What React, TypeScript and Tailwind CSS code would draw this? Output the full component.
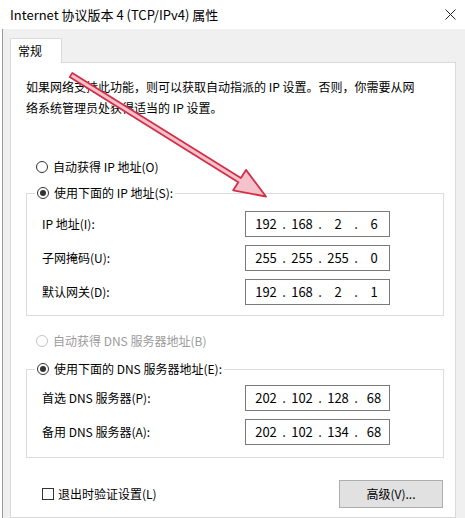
import React from 'react';

const FONT = "font-['Noto_Sans_CJK_SC','Noto_Sans',sans-serif]";

function Radio({ checked, disabled }: { checked?: boolean; disabled?: boolean }) {
  return (
    <span
      className={`flex h-[12px] w-[12px] shrink-0 items-center justify-center rounded-full border bg-white ${
        disabled ? 'border-[#c4c4c4]' : 'border-[#333333]'
      }`}
    >
      {checked && <span className="h-[6px] w-[6px] rounded-full bg-[#333333]" />}
    </span>
  );
}

// IP address control: four centered fields with dots between
function IpBox({ parts }: { parts: string[] }) {
  return (
    <div className="flex h-[26px] w-[145px] shrink-0 items-center border border-[#7a7a7a] bg-white pl-[8px] text-[13px] text-black">
      {parts.map((p, i) => (
        <React.Fragment key={i}>
          <span className="w-[24px] text-center">{p}</span>
          {i < 3 && <span className="w-[12px] text-center">.</span>}
        </React.Fragment>
      ))}
    </div>
  );
}

function Row({ label, parts }: { label: string; parts: string[] }) {
  return (
    <div className="flex items-center">
      <span className="w-[203px] shrink-0">{label}</span>
      <IpBox parts={parts} />
    </div>
  );
}

// group box with a radio as its caption sitting on the top border
function GroupBox({ caption, children, className }: { caption: string; children: React.ReactNode; className: string }) {
  return (
    <div className={`w-[418px] border border-[#dcdcdc] ${className}`}>
      <div className="-mt-[11px] ml-[8px] flex h-[20px] w-fit items-center gap-[5px] bg-white px-[2px]">
        <Radio checked />
        <span>{caption}</span>
      </div>
      {children}
    </div>
  );
}

function ArrowOverlay() {
  return (
    <svg className="pointer-events-none absolute left-0 top-0" width="465" height="518">
      <polygon
        points="69.7,77.1 238.3,182.2 233.2,190.3 266,196.5 246,169.9 240.9,178 72.3,72.9"
        fill="#f4c2ca"
        stroke="#d2304a"
        strokeWidth="1.8"
        strokeLinejoin="round"
      />
    </svg>
  );
}

export default function App() {
  return (
    <div className={`relative flex h-[518px] w-[465px] flex-col overflow-hidden bg-white text-[12px] text-black ${FONT}`}>
      {/* title bar */}
      <div className="flex h-[29px] shrink-0 items-center justify-between pl-[10px] pr-[9px]">
        <span className="text-[13px]">Internet 协议版本 4 (TCP/IPv4) 属性</span>
        <svg width="11" height="11" viewBox="0 0 11 11">
          <path d="M0.5 0.5 L10.5 10.5 M10.5 0.5 L0.5 10.5" stroke="#222" strokeWidth="1" />
        </svg>
      </div>

      <div className="ml-[2px] flex flex-1 flex-col border-l border-[#9a9a9a] bg-[#f0f0f0] pl-[7px] pt-[9px]">
        {/* tab */}
        <div className="relative z-10 -mb-px flex h-[25px] w-[52px] items-center border-x border-t border-[#d9d9d9] bg-white pl-[7px]">
          常规
        </div>

        {/* panel */}
        <div className="flex w-[446px] flex-1 flex-col border border-[#d9d9d9] bg-white pl-[15px] pr-[11px] pt-[13px]">
          <p className="leading-[21px]">
            如果网络支持此功能，则可以获取自动指派的 IP 设置。否则，你需要从网
            <br />
            络系统管理员处获得适当的 IP 设置。
          </p>

          <div className="ml-[10px] mt-[39px] flex h-[20px] items-center gap-[5px]">
            <Radio />
            <span>自动获得 IP 地址(O)</span>
          </div>

          <GroupBox caption="使用下面的 IP 地址(S):" className="mt-[16px] pb-[10px]">
            <div className="mt-[8px] flex flex-col gap-[8px] pl-[15px]">
              <Row label="IP 地址(I):" parts={['192', '168', '2', '6']} />
              <Row label="子网掩码(U):" parts={['255', '255', '255', '0']} />
              <Row label="默认网关(D):" parts={['192', '168', '2', '1']} />
            </div>
          </GroupBox>

          <div className="ml-[10px] mt-[15px] flex h-[20px] items-center gap-[5px] text-[#9a9a9a]">
            <Radio disabled />
            <span>自动获得 DNS 服务器地址(B)</span>
          </div>

          <GroupBox caption="使用下面的 DNS 服务器地址(E):" className="mt-[18px] pb-[12px]">
            <div className="mt-[6px] flex flex-col gap-[8px] pl-[15px]">
              <Row label="首选 DNS 服务器(P):" parts={['202', '102', '128', '68']} />
              <Row label="备用 DNS 服务器(A):" parts={['202', '102', '134', '68']} />
            </div>
          </GroupBox>

          <div className="mt-[22px] flex w-[418px] items-center justify-between pl-[16px] pr-[1px]">
            <div className="flex items-center gap-[4px]">
              <span className="h-[12px] w-[12px] border border-[#333333] bg-white" />
              <span>退出时验证设置(L)</span>
            </div>
            <button className="flex h-[28px] w-[104px] items-center justify-center border border-[#adadad] bg-[#e1e1e1]">
              高级(V)...
            </button>
          </div>
        </div>
      </div>

      <ArrowOverlay />
    </div>
  );
}
